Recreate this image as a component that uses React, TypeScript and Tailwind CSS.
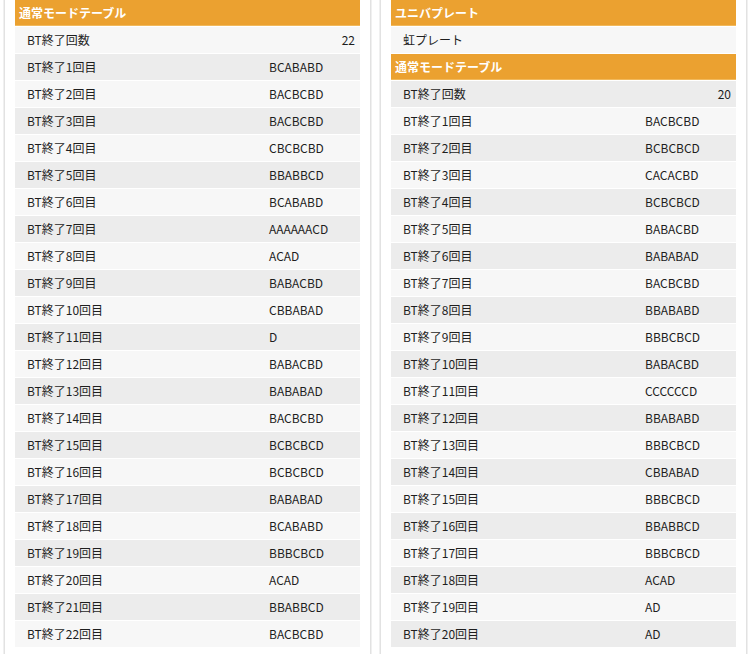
import React from "react";

type Row = { label: string; value: string };

const leftRows: string[] = [
  "BCABABD",
  "BACBCBD",
  "BACBCBD",
  "CBCBCBD",
  "BBABBCD",
  "BCABABD",
  "AAAAAACD",
  "ACAD",
  "BABACBD",
  "CBBABAD",
  "D",
  "BABACBD",
  "BABABAD",
  "BACBCBD",
  "BCBCBCD",
  "BCBCBCD",
  "BABABAD",
  "BCABABD",
  "BBBCBCD",
  "ACAD",
  "BBABBCD",
  "BACBCBD",
];

const rightRows: string[] = [
  "BACBCBD",
  "BCBCBCD",
  "CACACBD",
  "BCBCBCD",
  "BABACBD",
  "BABABAD",
  "BACBCBD",
  "BBABABD",
  "BBBCBCD",
  "BABACBD",
  "CCCCCCD",
  "BBABABD",
  "BBBCBCD",
  "CBBABAD",
  "BBBCBCD",
  "BBABBCD",
  "BBBCBCD",
  "ACAD",
  "AD",
  "AD",
];

const toRows = (list: string[]): Row[] =>
  list.map((v, i) => ({ label: `BT終了${i + 1}回目`, value: v }));

const Header = ({ title }: { title: string }) => (
  <div className="h-[26px] mb-px bg-[#eba130] border-b border-[#f1b95c] px-[4px] flex items-center text-white font-bold text-[12px]">
    {title}
  </div>
);

const SingleRow = ({ text, gray }: { text: string; gray?: boolean }) => (
  <div
    className={`h-[26px] mb-px flex items-center px-[12px] text-[12px] ${
      gray ? "bg-[#ececec]" : "bg-[#f7f7f7]"
    }`}
  >
    {text}
  </div>
);

const CountRow = ({ count, gray }: { count: number; gray?: boolean }) => (
  <div
    className={`h-[26px] mb-px flex items-center justify-between pl-[12px] pr-[5px] text-[12px] ${
      gray ? "bg-[#ececec]" : "bg-[#f7f7f7]"
    }`}
  >
    <span>BT終了回数</span>
    <span>{count}</span>
  </div>
);

const DataRows = ({ rows, grayOdd }: { rows: Row[]; grayOdd: boolean }) => (
  <>
    {rows.map((r, i) => {
      const gray = grayOdd ? i % 2 === 0 : i % 2 === 1;
      return (
        <div
          key={r.label}
          className={`h-[26px] mb-px flex items-center text-[12px] ${
            gray ? "bg-[#ececec]" : "bg-[#f7f7f7]"
          }`}
        >
          <span className="w-[254px] pl-[12px] shrink-0">{r.label}</span>
          <span>{r.value}</span>
        </div>
      );
    })}
  </>
);

const Card = ({ children }: { children: React.ReactNode }) => (
  <div className="w-[367px] h-[680px] shrink-0 border-x border-[#e2e2e2] shadow-[1px_0_0_#f0f0f0,-1px_0_0_#f0f0f0] px-[10px] bg-white">
    {children}
  </div>
);

export default function App() {
  return (
    <div
      className="w-[748px] h-[654px] overflow-hidden bg-white flex gap-[9px] pl-[4px] text-[#1e1e1e]"
      style={{ fontFamily: '"Noto Sans CJK JP", "Noto Sans", sans-serif' }}
    >
      <Card>
        <Header title="通常モードテーブル" />
        <CountRow count={22} />
        <DataRows rows={toRows(leftRows)} grayOdd={true} />
      </Card>
      <Card>
        <Header title="ユニバプレート" />
        <SingleRow text="虹プレート" />
        <Header title="通常モードテーブル" />
        <CountRow count={20} gray />
        <DataRows rows={toRows(rightRows)} grayOdd={false} />
      </Card>
    </div>
  );
}
